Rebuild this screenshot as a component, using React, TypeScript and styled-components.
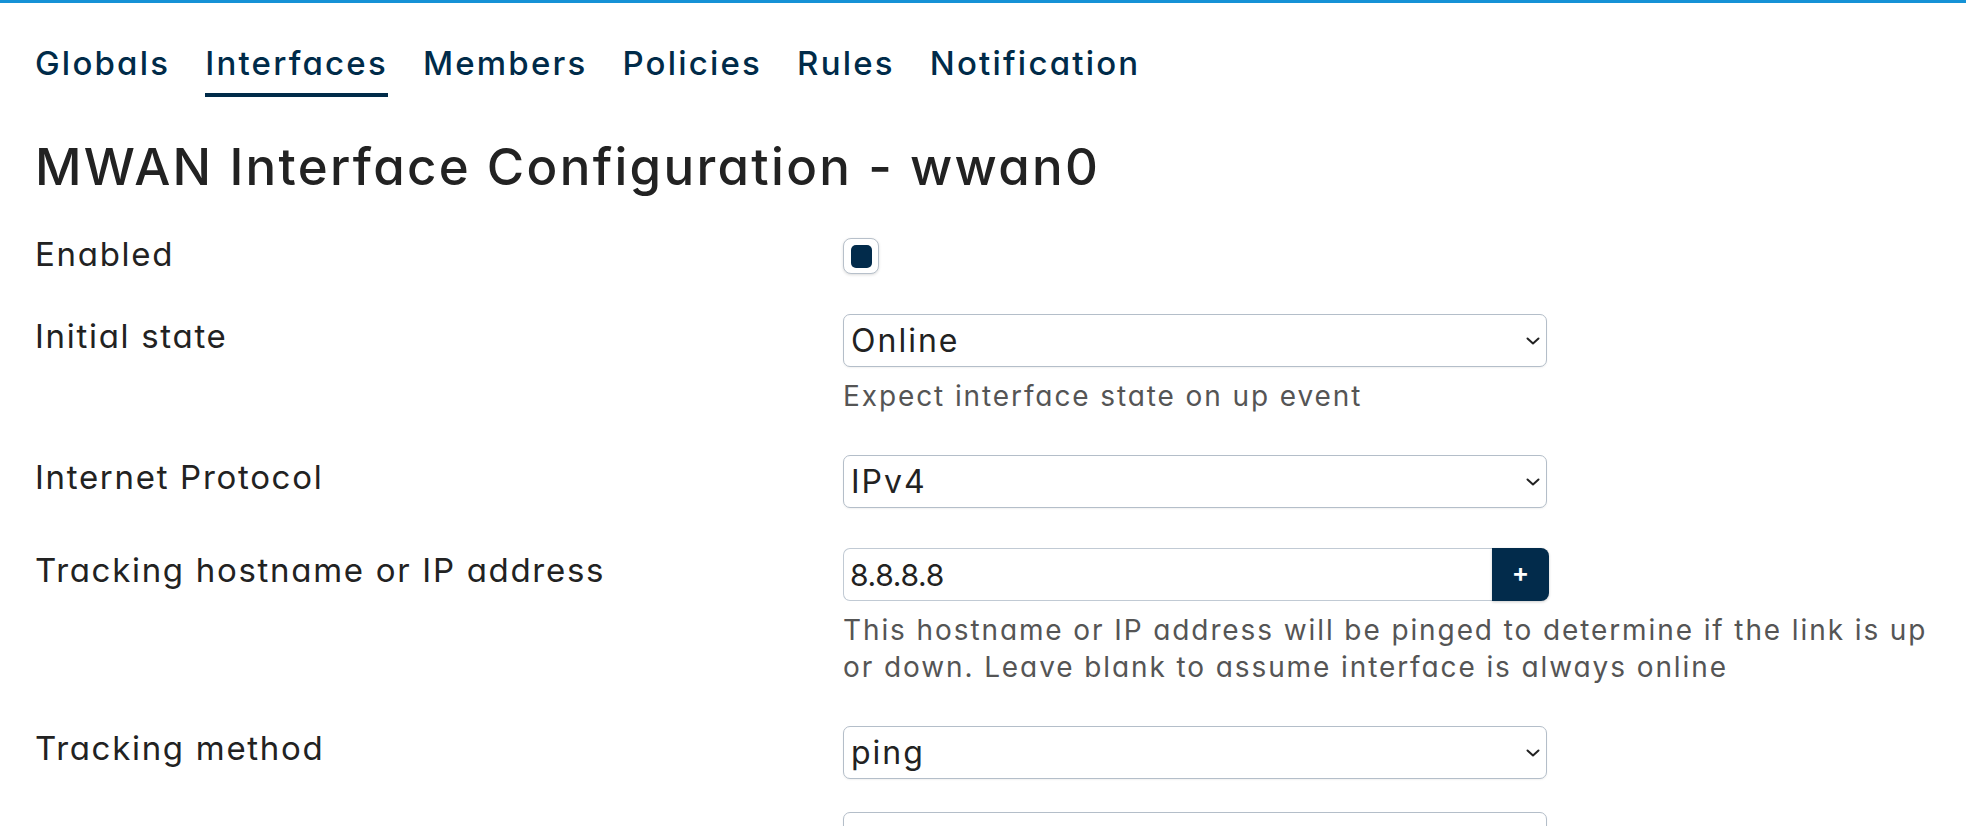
import React from 'react';
import styled, { createGlobalStyle } from 'styled-components';

const GlobalStyle = createGlobalStyle`
  html, body {
    margin: 0;
    padding: 0;
    background: #fff;
  }
  body {
    font-family: Inter, "Noto Sans", "Liberation Sans", sans-serif;
    font-feature-settings: "cv11";
    color: #222;
  }
  * {
    box-sizing: border-box;
  }
`;

const Page = styled.div`
  border-top: 3px solid #1592d6;
  padding: 0 4px 0 35px;
  height: 826px;
  overflow: hidden;
`;

const Tabs = styled.nav`
  display: flex;
  gap: 35px;
  padding-top: 40px;
`;

const Tab = styled.a<{ $active?: boolean }>`
  font-size: 33px;
  line-height: 40px;
  font-weight: 500;
  letter-spacing: 2.2px;
  color: #002b49;
  text-decoration: none;
  padding-bottom: 10px;
  border-bottom: 4px solid ${p => (p.$active ? '#002b49' : 'transparent')};
  cursor: pointer;
`;

const Heading = styled.h2`
  font-size: 51px;
  line-height: 61px;
  font-weight: 500;
  color: #222;
  margin: 39px 0 37px 0;
  letter-spacing: 2.3px;
`;

const Form = styled.div`
  display: flex;
  flex-direction: column;
`;

const Row = styled.div<{ $gap?: number }>`
  display: grid;
  grid-template-columns: 808px 1fr;
  align-items: start;
  margin-top: ${p => p.$gap ?? 40}px;
  &:first-child {
    margin-top: 0;
  }
`;

const Label = styled.label<{ $offset?: number }>`
  font-size: 33px;
  line-height: 40px;
  letter-spacing: 1.7px;
  color: #222;
  padding-top: ${p => p.$offset ?? 2}px;
`;

const Field = styled.div`
  display: flex;
  flex-direction: column;
  align-items: flex-start;
`;

const Check = styled.input.attrs({ type: 'checkbox' })`
  appearance: none;
  margin: 4px 0 0 0;
  width: 36px;
  height: 36px;
  border: 1px solid #b7c0ca;
  border-radius: 8px;
  background: #fff;
  box-shadow: 0 1px 3px rgba(0, 0, 0, 0.14);
  display: flex;
  align-items: center;
  justify-content: center;
  cursor: pointer;
  &:checked::after {
    content: '';
    width: 21px;
    height: 23px;
    border-radius: 5px;
    background: #022b4b;
  }
`;

const SelectWrap = styled.div`
  position: relative;
  width: 704px;
`;

const Select = styled.select`
  appearance: none;
  width: 100%;
  height: 53px;
  padding: 0 40px 0 7px;
  font-family: inherit;
  font-feature-settings: "cv11";
  font-size: 32px;
  letter-spacing: 2px;
  color: #222;
  background: #fff;
  border: 1px solid #b4bec9;
  border-radius: 7px;
  box-shadow: 0 1px 2px rgba(0, 0, 0, 0.06);
  outline: none;
`;

const Chevron = styled.svg`
  position: absolute;
  right: 7px;
  top: 50%;
  margin-top: -4px;
  pointer-events: none;
`;

const InputGroup = styled.div`
  display: flex;
  width: 706px;
  height: 53px;
`;

const TextInput = styled.input`
  flex: 1;
  min-width: 0;
  height: 100%;
  padding: 0 6px;
  font-family: inherit;
  font-feature-settings: "cv11";
  font-size: 30px;
  letter-spacing: -0.3px;
  color: #222;
  border: 1px solid #c1cad4;
  border-right: none;
  border-radius: 7px 0 0 7px;
  outline: none;
`;

const AddButton = styled.button`
  width: 57px;
  height: 100%;
  border: none;
  border-radius: 0 8px 8px 0;
  background: #022b4b;
  color: #fff;
  font-family: inherit;
  font-size: 26px;
  font-weight: 600;
  line-height: 1;
  padding: 0 0 3px 0;
  box-shadow: 0 1px 3px rgba(0, 0, 0, 0.2);
  cursor: pointer;
`;

const Desc = styled.div`
  margin-top: 11px;
  font-size: 28px;
  line-height: 37px;
  letter-spacing: 1.9px;
  color: #555;
`;

const SelectBox: React.FC<{ value: string; options: string[] }> = ({ value, options }) => (
  <SelectWrap>
    <Select defaultValue={value}>
      {options.map(o => (
        <option key={o} value={o}>{o}</option>
      ))}
    </Select>
    <Chevron width="14" height="8" viewBox="0 0 14 8">
      <path d="M1.5 1.5 L7 6.5 L12.5 1.5" fill="none" stroke="#222" strokeWidth="2" strokeLinecap="round" strokeLinejoin="round" />
    </Chevron>
  </SelectWrap>
);

const tabs = ['Globals', 'Interfaces', 'Members', 'Policies', 'Rules', 'Notification'];

const App: React.FC = () => (
  <>
    <GlobalStyle />
    <Page>
      <Tabs>
        {tabs.map(t => (
          <Tab key={t} $active={t === 'Interfaces'}>{t}</Tab>
        ))}
      </Tabs>
      <Heading>MWAN Interface Configuration - wwan0</Heading>
      <Form>
        <Row>
          <Label $offset={0}>Enabled</Label>
          <Field>
            <Check defaultChecked />
          </Field>
        </Row>
        <Row>
          <Label>Initial state</Label>
          <Field>
            <SelectBox value="Online" options={['Online', 'Offline']} />
            <Desc>Expect interface state on up event</Desc>
          </Field>
        </Row>
        <Row>
          <Label>Internet Protocol</Label>
          <Field>
            <SelectBox value="IPv4" options={['IPv4', 'IPv6']} />
          </Field>
        </Row>
        <Row>
          <Label>Tracking hostname or IP address</Label>
          <Field>
            <InputGroup>
              <TextInput defaultValue="8.8.8.8" />
              <AddButton>+</AddButton>
            </InputGroup>
            <Desc>
              This hostname or IP address will be pinged to determine if the link is up or down. Leave blank to assume interface is always online
            </Desc>
          </Field>
        </Row>
        <Row>
          <Label>Tracking method</Label>
          <Field>
            <SelectBox value="ping" options={['ping', 'arping', 'httping', 'nping-tcp']} />
          </Field>
        </Row>
        <Row $gap={33}>
          <Label $offset={14}>Tracking reliability</Label>
          <Field>
            <SelectBox value="1" options={['1', '2', '3']} />
          </Field>
        </Row>
      </Form>
    </Page>
  </>
);

export default App;
